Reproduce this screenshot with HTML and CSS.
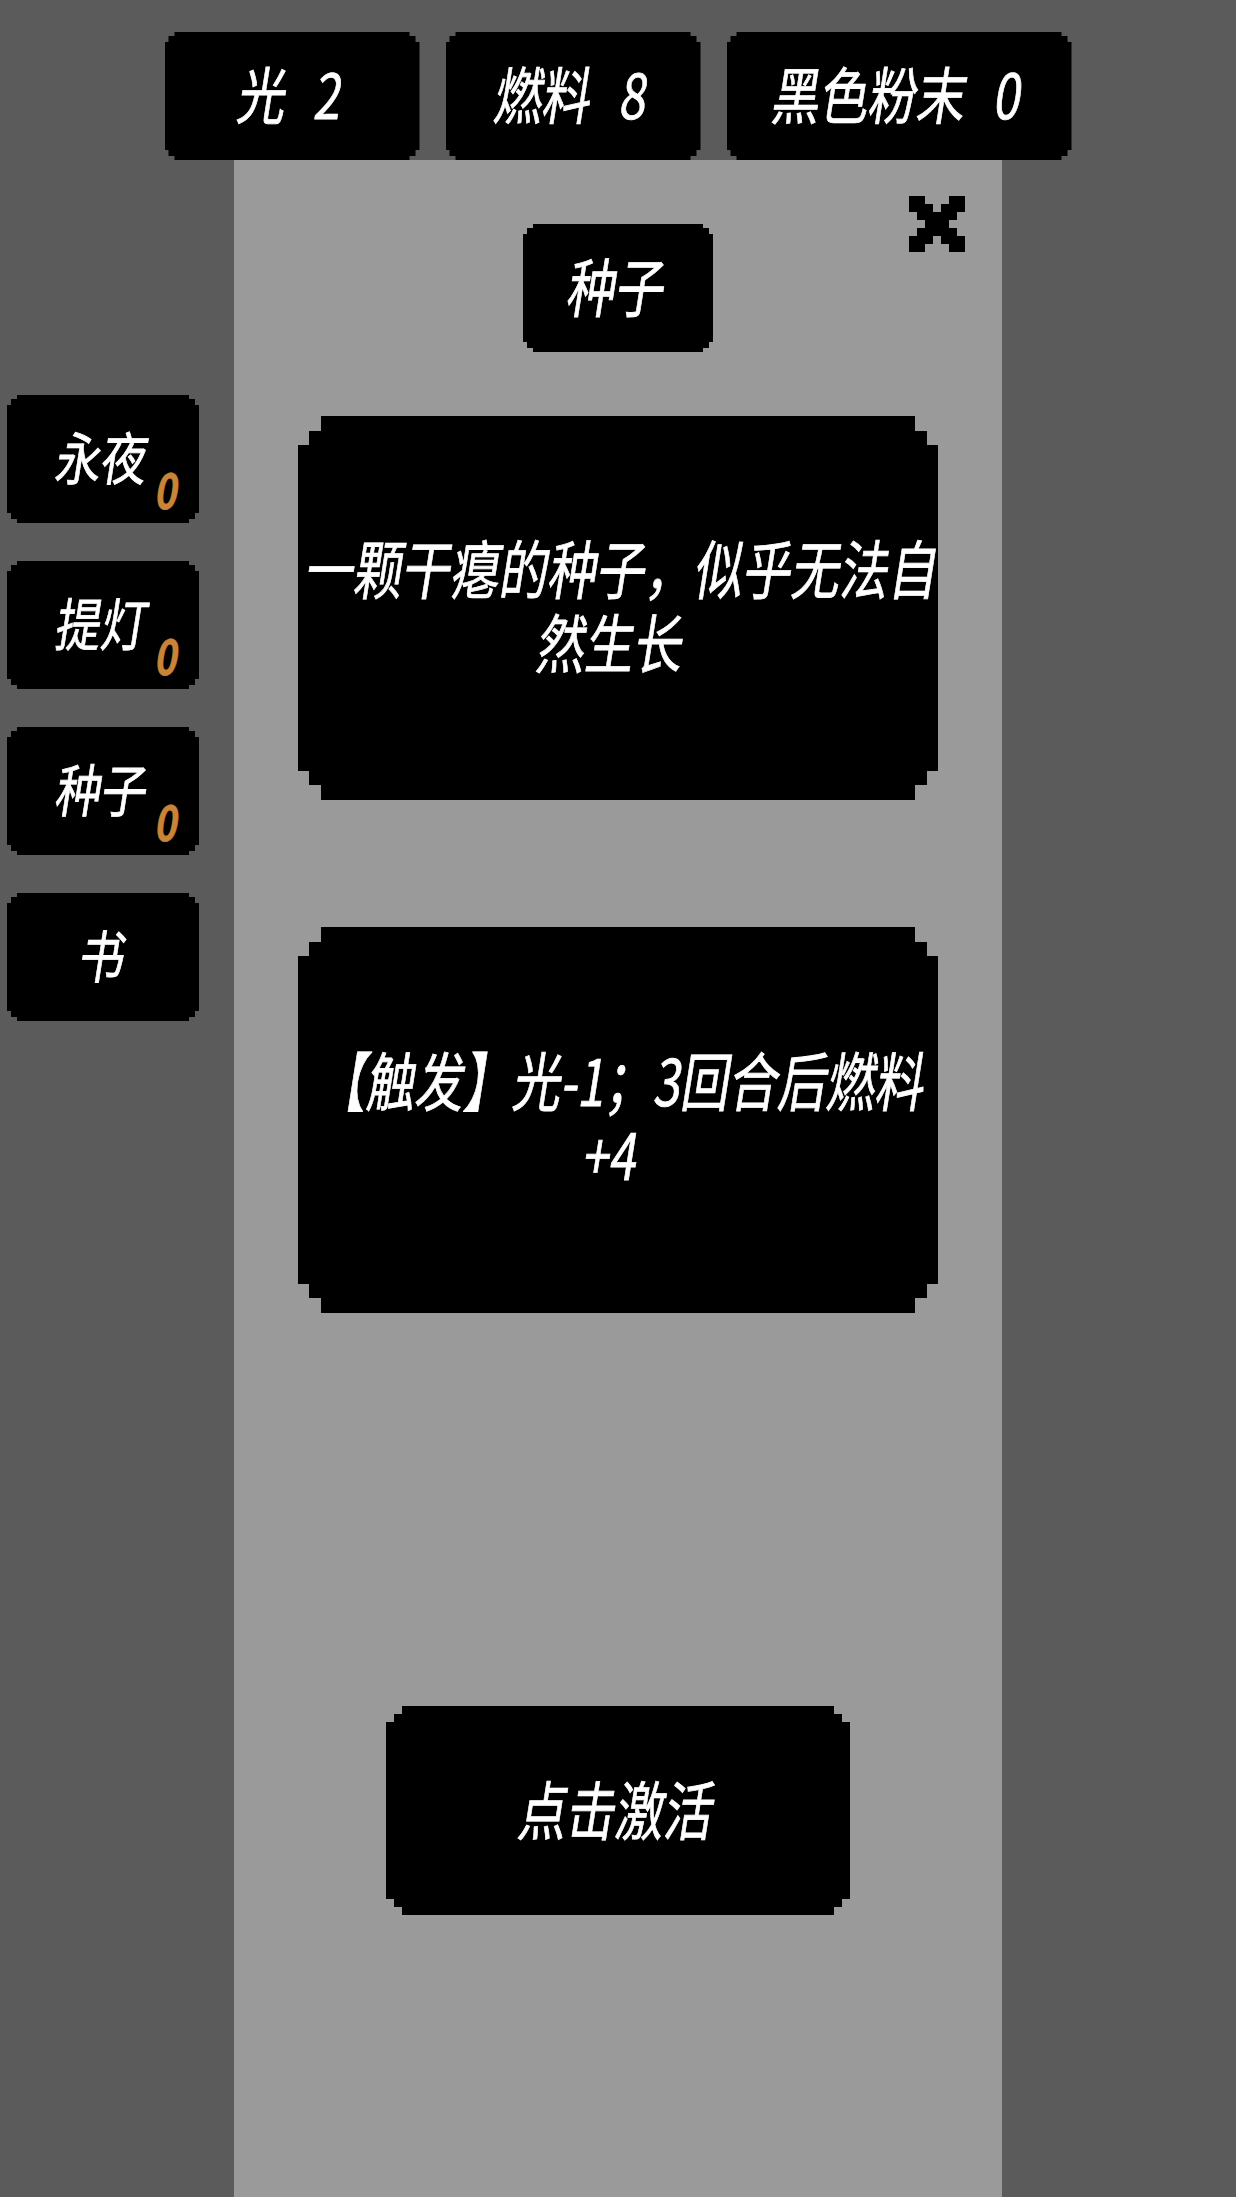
FILE: index.html
```html
<!DOCTYPE html>
<html lang="zh-CN">
<head>
<meta charset="utf-8">
<title>种子</title>
<link rel="stylesheet" href="styles.css">
</head>
<body>
<div class="app">
  <header class="stats">
    <div class="stat px px-s"><span class="t">光 2</span></div>
    <div class="stat px px-s"><span class="t">燃料 8</span></div>
    <div class="stat stat-wide px px-s"><span class="t">黑色粉末 0</span></div>
  </header>
  <div class="main">
    <nav class="side">
      <div class="item px px-s"><span class="lbl">永夜<span class="cnt">0</span></span></div>
      <div class="item px px-s"><span class="lbl">提灯<span class="cnt">0</span></span></div>
      <div class="item px px-s"><span class="lbl">种子<span class="cnt">0</span></span></div>
      <div class="item px px-s"><span class="lbl">书</span></div>
    </nav>
    <section class="panel">
      <svg class="close" width="56" height="56" viewBox="0 0 7 7" shape-rendering="crispEdges" aria-label="关闭">
        <g fill="#000">
          <rect x="0" y="0" width="2" height="1"/><rect x="5" y="0" width="2" height="1"/>
          <rect x="0" y="1" width="3" height="1"/><rect x="4" y="1" width="3" height="1"/>
          <rect x="1" y="2" width="5" height="1"/>
          <rect x="2" y="3" width="3" height="1"/>
          <rect x="1" y="4" width="5" height="1"/>
          <rect x="0" y="5" width="3" height="1"/><rect x="4" y="5" width="3" height="1"/>
          <rect x="0" y="6" width="2" height="1"/><rect x="5" y="6" width="2" height="1"/>
        </g>
      </svg>
      <div class="title px px-s"><span class="t t-lg">种子</span></div>
      <div class="card px px-l"><div class="ctext">一颗干瘪的种子，似乎无法自然生长</div></div>
      <div class="card card-2 px px-l"><div class="ctext">【触发】光-1；3回合后燃料+4</div></div>
      <div class="btn px px-m"><span class="t t-lg">点击激活</span></div>
    </section>
  </div>
</div>
</body>
</html>
```
FILE: styles.css
```css
html, body {
  margin: 0;
  padding: 0;
}
body {
  background: #5b5b5b;
  color: #fff;
  font-family: "Noto Sans CJK SC", "Noto Sans", sans-serif;
  -webkit-text-stroke: 0.8px currentColor;
}
.app {
  width: 1236px;
  min-height: 2197px;
}

/* pixel-stepped corners */
.px {
  background: #000;
  clip-path: polygon(
    var(--a) 0, calc(100% - var(--a)) 0,
    calc(100% - var(--a)) var(--h1), calc(100% - var(--b)) var(--h1),
    calc(100% - var(--b)) var(--h2), 100% var(--h2),
    100% calc(100% - var(--h2)), calc(100% - var(--b)) calc(100% - var(--h2)),
    calc(100% - var(--b)) calc(100% - var(--h1)), calc(100% - var(--a)) calc(100% - var(--h1)),
    calc(100% - var(--a)) 100%, var(--a) 100%,
    var(--a) calc(100% - var(--h1)), var(--b) calc(100% - var(--h1)),
    var(--b) calc(100% - var(--h2)), 0 calc(100% - var(--h2)),
    0 var(--h2), var(--b) var(--h2),
    var(--b) var(--h1), var(--a) var(--h1)
  );
}
.px-s { --a: 10px; --b: 4px; --h1: 4px; --h2: 10px; }
.px-m { --a: 16px; --b: 8px; --h1: 8px; --h2: 16px; }
.px-l { --a: 23px; --b: 11px; --h1: 15px; --h2: 29px; }

.t {
  display: inline-block;
  white-space: nowrap;
  font-size: 62px;
  line-height: 1;
  word-spacing: 23px;
  transform: translateY(-4px) skewX(-9deg) scaleX(0.78);
}
.t-lg {
  font-size: 64px;
  transform: translateY(-4px) skewX(-9deg) scaleX(0.76);
}

/* top stats */
.stats {
  display: flex;
  justify-content: center;
  gap: 26px;
  padding-top: 32px;
}
.stat {
  width: 255px;
  height: 128px;
  display: flex;
  align-items: center;
  justify-content: center;
}
.stat-wide {
  width: 345px;
}

/* main area */
.main {
  display: grid;
  grid-template-columns: 234px 768px 1fr;
}
.side {
  display: flex;
  flex-direction: column;
  gap: 38px;
  padding: 235px 0 0 7px;
}
.item {
  width: 192px;
  height: 128px;
  display: flex;
  align-items: center;
  justify-content: center;
}
.lbl {
  position: relative;
  display: inline-block;
  white-space: nowrap;
  font-size: 57px;
  line-height: 1;
  transform: translateY(-4px) skewX(-9deg) scaleX(0.8);
}
.cnt {
  position: absolute;
  left: calc(100% + 17px);
  top: 37px;
  font-size: 48px;
  font-weight: 700;
  line-height: 1;
  color: #c98437;
  -webkit-text-stroke: 0.6px currentColor;
}

.panel {
  position: relative;
  background: #9a9a9a;
  min-height: 2037px;
  display: flex;
  flex-direction: column;
  align-items: center;
  padding-top: 64px;
  box-sizing: border-box;
}
.close {
  position: absolute;
  top: 36px;
  right: 37px;
  display: block;
}
.title {
  width: 190px;
  height: 128px;
  display: flex;
  align-items: center;
  justify-content: center;
}
.card {
  margin-top: 64px;
  width: 640px;
  height: 384px;
  display: flex;
  align-items: center;
  justify-content: center;
}
.card-2 {
  margin-top: 127px;
  height: 386px;
}
.ctext {
  flex: none;
  width: 842px;
  font-size: 64px;
  line-height: 74px;
  text-align: center;
  transform: translateY(-5px) skewX(-9deg) scaleX(0.76);
}
.btn {
  margin-top: 393px;
  width: 464px;
  height: 209px;
  display: flex;
  align-items: center;
  justify-content: center;
}
```
